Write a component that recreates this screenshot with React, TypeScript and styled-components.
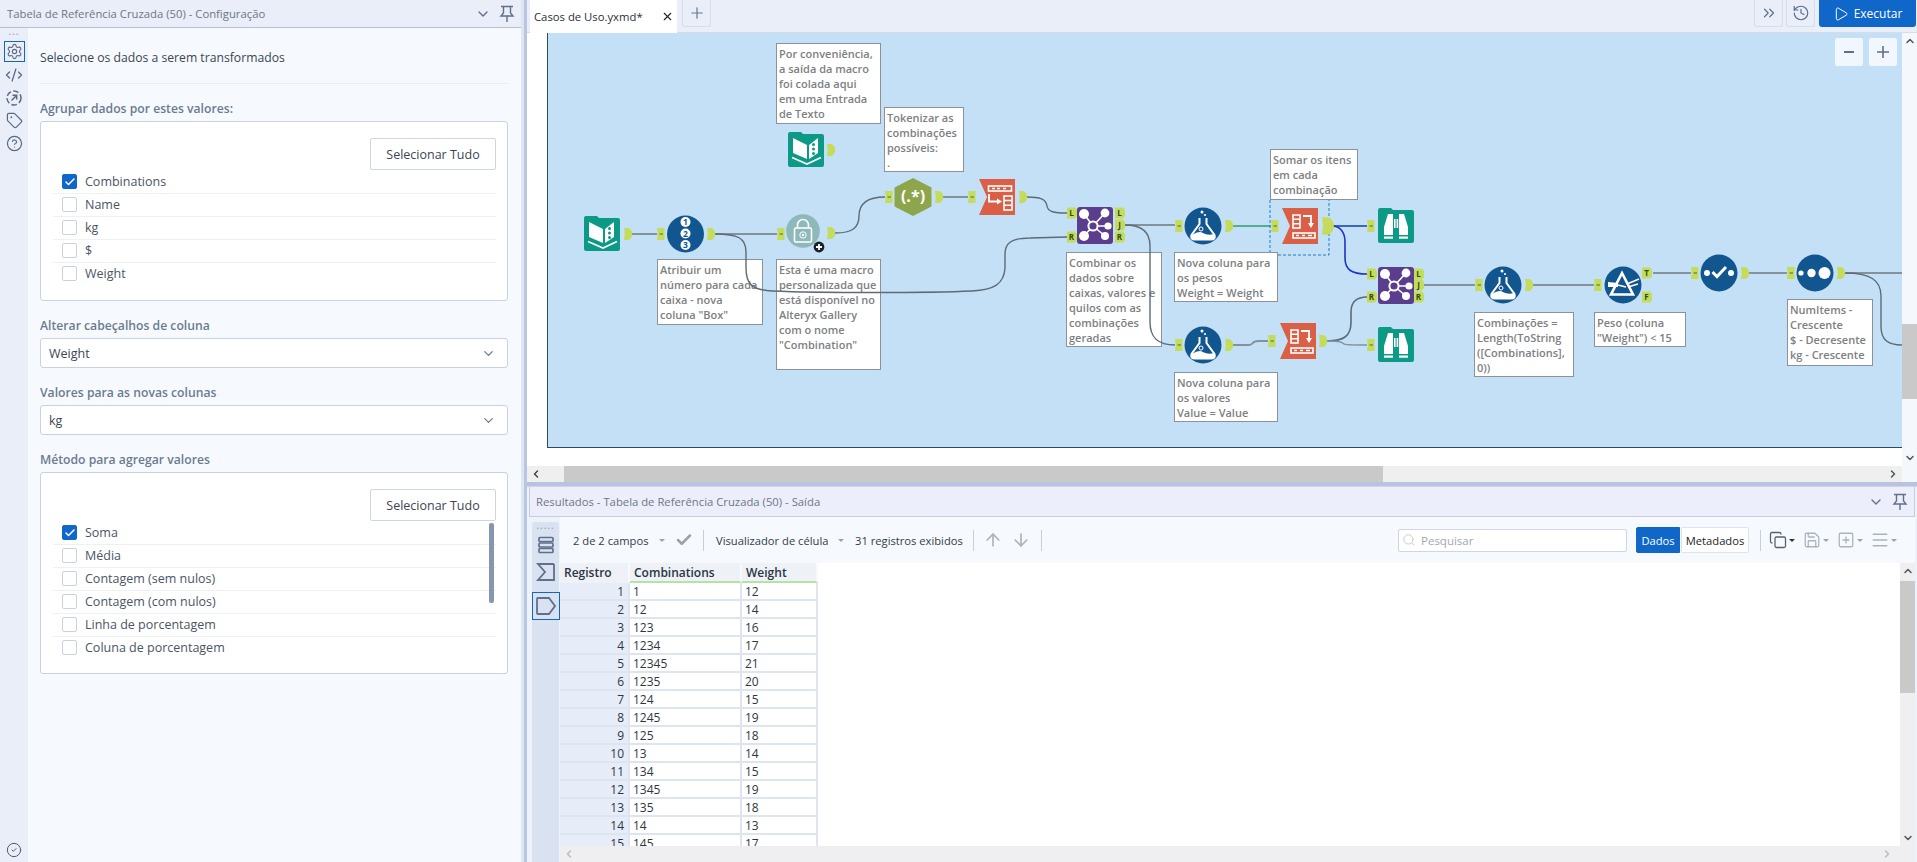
import React from 'react'
import styled, { createGlobalStyle } from 'styled-components'
import {
  Check,
  ChevronDown,
  ChevronLeft,
  ChevronRight,
  ChevronUp,
  ChevronsRight,
  CircleCheck,
  CircleHelp,
  CodeXml,
  Copy,
  History,
  Menu,
  Play,
  Plus,
  Save,
  Search,
  Settings,
  SquarePlus,
  Tag,
  X,
  ArrowDown,
  ArrowUp,
} from 'lucide-react'

const FONT = '"Open Sans", "Noto Sans", "Liberation Sans", sans-serif'

const GlobalStyle = createGlobalStyle`
  html, body {
    margin: 0;
    padding: 0;
    background: #eef2fb;
    overflow: hidden;
  }
  * {
    box-sizing: border-box;
  }
`

/* ---------- workflow data ---------- */

const notes = [
  { x: 776, y: 43, w: 105, h: 81, lines: ['Por conveniência,', 'a saída da macro', 'foi colada aqui', 'em uma Entrada', 'de Texto'] },
  { x: 884, y: 107, w: 80, h: 65, lines: ['Tokenizar as', 'combinações', 'possíveis:', '.'] },
  { x: 657, y: 259, w: 106, h: 66, lines: ['Atribuir um', 'número para cada', 'caixa - nova', 'coluna "Box"'] },
  { x: 776, y: 259, w: 105, h: 111, lines: ['Esta é uma macro', 'personalizada que', 'está disponível no', 'Alteryx Gallery', 'com o nome', '"Combination"'] },
  { x: 1066, y: 252, w: 96, h: 95, lines: ['Combinar os', 'dados sobre', 'caixas, valores e', 'quilos com as', 'combinações', 'geradas'] },
  { x: 1174, y: 252, w: 104, h: 50, lines: ['Nova coluna para', 'os pesos', 'Weight = Weight'] },
  { x: 1270, y: 149, w: 88, h: 51, lines: ['Somar os itens', 'em cada', 'combinação'] },
  { x: 1174, y: 372, w: 104, h: 50, lines: ['Nova coluna para', 'os valores', 'Value = Value'] },
  { x: 1474, y: 312, w: 100, h: 65, lines: ['Combinações =', 'Length(ToString', '([Combinations],', '0))'] },
  { x: 1594, y: 312, w: 92, h: 35, lines: ['Peso (coluna', '"Weight") < 15'] },
  { x: 1787, y: 299, w: 86, h: 67, lines: ['NumItems -', 'Crescente', '$ - Decresente', 'kg - Crescente'] },
]

const GRAY = '#84929c'
const DARK = '#5d6b76'

const wires = [
  { d: 'M630 234H657', c: GRAY, w: 2 },
  { d: 'M715 234H777', c: GRAY, w: 2 },
  { d: 'M715 234C738 234 746 238 746 252V268C746 284 752 290 772 291C820 293 930 293 972 291C994 290 1004 284 1005 268V254C1005 244 1010 238 1030 238L1067 237', c: DARK, w: 1.4 },
  { d: 'M835 233C852 233 859 228 859 216C859 204 866 197 885 197', c: DARK, w: 1.4 },
  { d: 'M943 197H968', c: GRAY, w: 2 },
  { d: 'M1027 197C1040 197 1046 199 1047 206C1048 212 1054 213 1067 213', c: DARK, w: 1.4 },
  { d: 'M1125 225H1175', c: GRAY, w: 2 },
  { d: 'M1125 225C1142 225 1150 232 1150 246V322C1150 338 1158 345 1175 345', c: DARK, w: 1.4 },
  { d: 'M1233 226H1271', c: '#58ad8e', w: 2 },
  { d: 'M1332 226H1367', c: '#3c66c4', w: 2.2 },
  { d: 'M1332 226C1340 226 1345 232 1345 242V258C1345 270 1352 274 1367 274', c: '#1c36bd', w: 1.6 },
  { d: 'M1233 345H1249C1254 345 1251 341 1258 341H1268', c: GRAY, w: 2 },
  { d: 'M1327 341C1344 341 1351 336 1351 322V312C1351 302 1356 297 1367 297', c: DARK, w: 1.6 },
  { d: 'M1327 341C1340 341 1342 342 1344 344C1345 345 1350 345 1367 345', c: GRAY, w: 1.6 },
  { d: 'M1424 285H1475', c: GRAY, w: 2 },
  { d: 'M1533 285H1594', c: GRAY, w: 2 },
  { d: 'M1653 273H1691', c: GRAY, w: 2 },
  { d: 'M1749 273H1787', c: GRAY, w: 2 },
  { d: 'M1845 273H1902', c: GRAY, w: 2 },
  { d: 'M1845 273C1870 273 1881 280 1881 296V326C1881 340 1888 345 1902 345', c: DARK, w: 1.4 },
]

const tableRows = [
  ['1', '12'], ['12', '14'], ['123', '16'], ['1234', '17'], ['12345', '21'],
  ['1235', '20'], ['124', '15'], ['1245', '19'], ['125', '18'], ['13', '14'],
  ['134', '15'], ['1345', '19'], ['135', '18'], ['14', '13'], ['145', '17'],
]

const groupFields = ['Combinations', 'Name', 'kg', '$', 'Weight']
const methods = ['Soma', 'Média', 'Contagem (sem nulos)', 'Contagem (com nulos)', 'Linha de porcentagem', 'Coluna de porcentagem']

/* ---------- workflow drawings ---------- */

const ANCHOR = '#c4dc5a'
const TEAL = '#0c9a86'
const BLUE = '#12568f'
const RED = '#db5f46'
const PURPLE = '#5b3d8e'

const InAnchor = ({ x, y }: { x: number; y: number }) => (
  <g transform={`translate(${x} ${y})`}>
    <path d="M0 -6H7.5V6H0L0.8 0Z" fill={ANCHOR} />
    <path d="M2.5 -1H6V1H2.5Z" fill="#8aa24e" />
  </g>
)

const OutAnchor = ({ x, y, big }: { x: number; y: number; big?: boolean }) => (
  <g transform={`translate(${x} ${y})${big ? ' scale(1.45)' : ''}`}>
    <path d="M0 -6H3.5C6.5 -6 8.2 -2.8 8.2 0C8.2 2.8 6.5 6 3.5 6H0L0.8 0Z" fill={ANCHOR} />
  </g>
)

const LetterAnchor = ({ x, y, letter, w = 10 }: { x: number; y: number; letter: string; w?: number }) => (
  <g transform={`translate(${x} ${y})`}>
    <path d={`M0 -5.5H${w - 2}L${w} -3V3L${w - 2} 5.5H0Z`} fill={ANCHOR} />
    <text x={w / 2 - 0.5} y="3" textAnchor="middle" fontSize="8" fontWeight="700" fontFamily={FONT} fill="#2f4d1c">
      {letter}
    </text>
  </g>
)

const FolderTile = ({ x, y, children }: { x: number; y: number; children: React.ReactNode }) => (
  <g transform={`translate(${x} ${y})`}>
    <path d="M2 0H13L15 2H34A2 2 0 0 1 36 4V33A2 2 0 0 1 34 35H2A2 2 0 0 1 0 33V2A2 2 0 0 1 2 0Z" fill={TEAL} />
    {children}
  </g>
)

const BookNode = ({ x, y }: { x: number; y: number }) => (
  <FolderTile x={x} y={y}>
    <path d="M5 6L19 13V27L5 21Z" fill="#fff" />
    <path d="M21 13L30 6V21L21 27Z" fill="#fff" />
    <circle cx="25.5" cy="12.5" r="1.5" fill={TEAL} />
    <circle cx="25.5" cy="17" r="1.5" fill={TEAL} />
    <circle cx="25.5" cy="21.5" r="1.5" fill={TEAL} />
    <path d="M4 25.5L19 32L33 25.5" fill="none" stroke="#fff" strokeWidth="1.6" />
  </FolderTile>
)

const BrowseNode = ({ x, y }: { x: number; y: number }) => (
  <FolderTile x={x} y={y}>
    <path d="M10 6H15V27H6V19Z" fill="#fff" />
    <path d="M21 6H26L30 19V27H21Z" fill="#fff" />
    <rect x="16" y="11" width="1.6" height="9" fill="#fff" />
    <rect x="18.6" y="11" width="1.6" height="9" fill="#fff" />
    <rect x="6" y="28.5" width="9" height="2.2" fill="#fff" />
    <rect x="21" y="28.5" width="9" height="2.2" fill="#fff" />
  </FolderTile>
)

const Disc = ({ cx, cy, children, fill = BLUE, r = 18.5 }: { cx: number; cy: number; children: React.ReactNode; fill?: string; r?: number }) => (
  <g transform={`translate(${cx} ${cy})`}>
    <circle r={r} fill={fill} />
    {children}
  </g>
)

const RecordIdNode = ({ cx, cy }: { cx: number; cy: number }) => (
  <Disc cx={cx} cy={cy}>
    {['1', '2', '3'].map((n, i) => (
      <g key={n} transform={`translate(0 ${i * 11.5 - 12})`}>
        <circle r="5" fill="#fff" />
        <text y="3" textAnchor="middle" fontSize="8.5" fontWeight="700" fontFamily={FONT} fill={BLUE}>
          {n}
        </text>
      </g>
    ))}
  </Disc>
)

const LockNode = ({ cx, cy }: { cx: number; cy: number }) => (
  <g>
    <Disc cx={cx} cy={cy} fill="#8db9ba" r={16.8}>
      <path d="M-5.5 -3V-6A5.5 5.5 0 0 1 5.5 -6V-3" fill="none" stroke="#fff" strokeWidth="1.6" />
      <rect x="-8.5" y="-3" width="17" height="14" rx="1.5" fill="none" stroke="#fff" strokeWidth="1.6" />
      <circle cy="4" r="3.2" fill="none" stroke="#fff" strokeWidth="1" />
      <circle cy="4" r="1.2" fill="#fff" />
    </Disc>
    <circle cx={cx + 16} cy={cy + 16} r="5.4" fill="#1c1f24" />
    <path d={`M${cx + 13} ${cy + 16}h6M${cx + 16} ${cy + 13}v6`} stroke="#fff" strokeWidth="1.8" />
  </g>
)

const RegexNode = ({ cx, cy }: { cx: number; cy: number }) => (
  <g transform={`translate(${cx} ${cy})`}>
    <path d="M0 -19L18.5 -9.5V9.5L0 19L-18.5 9.5V-9.5Z" fill="#8da64b" />
    <text y="5" textAnchor="middle" fontSize="16" fontWeight="700" fontFamily={FONT} fill="#fff">
      (.*)
    </text>
  </g>
)

const RedTile = ({ x, y, children }: { x: number; y: number; children: React.ReactNode }) => (
  <g transform={`translate(${x} ${y})`}>
    <path d="M0 0H36V36H0L8 18Z" fill={RED} />
    {children}
  </g>
)

const TextToColumnsNode = ({ x, y }: { x: number; y: number }) => (
  <RedTile x={x} y={y}>
    <rect x="9.5" y="7" width="23" height="5" fill="none" stroke="#fff" strokeWidth="1.6" />
    <path d="M13 9.5h3M18 9.5h3M24 9.5h3" stroke="#fff" strokeWidth="1.6" />
    <path d="M10 15V22.5H19" fill="none" stroke="#fff" strokeWidth="1.8" />
    <path d="M18 19.5L23 22.5L18 25.5Z" fill="#fff" />
    <rect x="25" y="17" width="8" height="14" fill="none" stroke="#fff" strokeWidth="1.6" />
    <path d="M25 21.5H33M25 26.2H33" stroke="#fff" strokeWidth="1.6" />
  </RedTile>
)

const SummarizeNode = ({ x, y }: { x: number; y: number }) => (
  <RedTile x={x} y={y}>
    <rect x="11" y="7" width="7" height="13" fill="none" stroke="#fff" strokeWidth="1.6" />
    <path d="M11 11.3H18M11 15.7H18" stroke="#fff" strokeWidth="1.6" />
    <path d="M21 8H29V15" fill="none" stroke="#fff" strokeWidth="1.8" />
    <path d="M26 15H32L29 20Z" fill="#fff" />
    <rect x="11" y="25" width="22" height="5" fill="none" stroke="#fff" strokeWidth="1.6" />
    <path d="M14 27.5h3M20 27.5h3M26 27.5h4" stroke="#fff" strokeWidth="1.6" />
  </RedTile>
)

const JoinNode = ({ x, y }: { x: number; y: number }) => (
  <g transform={`translate(${x} ${y})`}>
    <rect width="36" height="37" rx="3" fill={PURPLE} />
    <path d="M16 19L7 7M16 19L28 6M16 19H31M16 19L7 29M16 19L28 29" stroke="#fff" strokeWidth="1.6" />
    <circle cx="16" cy="19" r="4.6" fill={PURPLE} stroke="#fff" strokeWidth="2" />
    <circle cx="7" cy="7" r="5" fill="#fff" />
    <circle cx="28" cy="6" r="4.4" fill="#fff" />
    <circle cx="31" cy="19" r="3.6" fill="#fff" />
    <circle cx="7" cy="29" r="5" fill="#fff" />
    <circle cx="28" cy="29" r="4" fill="#fff" />
  </g>
)

const FormulaNode = ({ cx, cy }: { cx: number; cy: number }) => (
  <Disc cx={cx} cy={cy}>
    <circle cx="-1" cy="-14" r="1.5" fill="#fff" />
    <circle cx="2" cy="-11" r="1.1" fill="#fff" />
    <path d="M-3.5 -8V-2L-11.5 9Q-13 13.5 -8 13.5H8Q13 13.5 11.5 9L3.5 -2V-8" fill="none" stroke="#fff" strokeWidth="2" />
    <path d="M-11 9Q-4 4 0 7Q5 10 11 8Q13 14 8 14H-8Q-13 14 -11 9Z" fill="#fff" />
    <circle cx="-2" cy="3" r="2" fill="none" stroke="#fff" strokeWidth="1" />
    <circle cx="1" cy="6" r="1.3" fill={BLUE} />
  </Disc>
)

const FilterNode = ({ cx, cy }: { cx: number; cy: number }) => (
  <Disc cx={cx} cy={cy}>
    <path d="M-1 -12L10 9.5H-12Z" fill="none" stroke="#fff" strokeWidth="2.6" />
    <path d="M-15 -3L-5 -2V2L-15 2Z" fill="#fff" />
    <path d="M-5 0L3 2M4 -1L16 -6M5 2L15 -1" stroke="#fff" strokeWidth="1.4" />
  </Disc>
)

const SelectNode = ({ cx, cy }: { cx: number; cy: number }) => (
  <Disc cx={cx} cy={cy}>
    <circle cx="-12" r="3" fill="#fff" />
    <path d="M-6.5 -1L-2 3.5L7 -6" fill="none" stroke="#fff" strokeWidth="3" />
    <circle cx="12" r="3" fill="#fff" />
  </Disc>
)

const SortNode = ({ cx, cy }: { cx: number; cy: number }) => (
  <Disc cx={cx} cy={cy}>
    <circle cx="-14" r="2.6" fill="#fff" />
    <circle cx="-3.5" r="4.2" fill="#fff" />
    <circle cx="9.5" r="6" fill="#fff" />
  </Disc>
)

/* ---------- small icons ---------- */

const PinIcon = () => (
  <svg width="16" height="18" viewBox="0 0 16 18" fill="none" stroke="#5f6f8c" strokeWidth="1.4">
    <path d="M2 1.5H14M4.5 1.5V8L2 11H14L11.5 8V1.5M8 11V17" />
  </svg>
)

const RotateArrowIcon = () => (
  <svg width="18" height="18" viewBox="0 0 18 18" fill="none" stroke="#5a6a82" strokeWidth="1.5">
    <circle cx="9" cy="9" r="7" strokeDasharray="5.5 2.5" />
    <path d="M6.5 11.5L11.5 6.5M7.5 6.3H11.7V10.5" />
  </svg>
)

const RowsIcon = () => (
  <svg width="18" height="18" viewBox="0 0 18 18" fill="none" stroke="#5f6f8c" strokeWidth="1.7">
    <rect x="2" y="1.5" width="14" height="4" rx="1" />
    <rect x="2" y="7" width="14" height="4" rx="1" />
    <rect x="2" y="12.5" width="14" height="4" rx="1" />
  </svg>
)

const SigmaBoxIcon = () => (
  <svg width="20" height="20" viewBox="0 0 20 20" fill="none" stroke="#5f6f8c" strokeWidth="1.8">
    <path d="M18 2H2L9 10L2 18H18V2" />
  </svg>
)

const OutputTagIcon = () => (
  <svg width="22" height="20" viewBox="0 0 22 20" fill="none" stroke="#5f6f8c" strokeWidth="1.8">
    <path d="M2 3A1 1 0 0 1 3 2H14L20 10L14 18H3A1 1 0 0 1 2 17Z" />
  </svg>
)

/* ---------- component ---------- */

const CheckRow: React.FC<{ label: string; checked?: boolean }> = ({ label, checked }) => (
  <Row>
    <Box $checked={checked}>{checked && <Check size={12} strokeWidth={3} color="#fff" />}</Box>
    <RowLabel>{label}</RowLabel>
  </Row>
)

const App: React.FC = () => {
  return (
    <Page>
      <GlobalStyle />
      <LeftPanel>
        <PanelHeader>
          <PanelTitle>Tabela de Referência Cruzada (50) - Configuração</PanelTitle>
          <HeaderTools>
            <ChevronDown size={16} color="#5f6f8c" />
            <PinIcon />
          </HeaderTools>
        </PanelHeader>
        <PanelBody>
          <SideRail>
            <RailDots>...</RailDots>
            <RailButton $active>
              <Settings size={17} color="#5a6a82" strokeWidth={1.6} />
            </RailButton>
            <RailButton>
              <CodeXml size={18} color="#5a6a82" strokeWidth={1.7} />
            </RailButton>
            <RailButton>
              <RotateArrowIcon />
            </RailButton>
            <RailButton>
              <Tag size={17} color="#5a6a82" strokeWidth={1.7} />
            </RailButton>
            <RailButton>
              <CircleHelp size={17} color="#5a6a82" strokeWidth={1.7} />
            </RailButton>
            <RailFoot>
              <CircleCheck size={16} color="#4e5b6e" strokeWidth={1.5} />
            </RailFoot>
          </SideRail>
          <Form>
            <Intro>Selecione os dados a serem transformados</Intro>
            <FieldLabel>Agrupar dados por estes valores:</FieldLabel>
            <ListBox $height={180}>
              <SelectAll>Selecionar Tudo</SelectAll>
              {groupFields.map((f, i) => (
                <CheckRow key={f} label={f} checked={i === 0} />
              ))}
            </ListBox>
            <FieldLabel>Alterar cabeçalhos de coluna</FieldLabel>
            <SelectBox>
              Weight
              <ChevronDown size={15} color="#6d7a8e" />
            </SelectBox>
            <FieldLabel>Valores para as novas colunas</FieldLabel>
            <SelectBox>
              kg
              <ChevronDown size={15} color="#6d7a8e" />
            </SelectBox>
            <FieldLabel>Método para agregar valores</FieldLabel>
            <ListBox $height={202}>
              <SelectAll>Selecionar Tudo</SelectAll>
              {methods.map((f, i) => (
                <CheckRow key={f} label={f} checked={i === 0} />
              ))}
              <ListScroll />
            </ListBox>
          </Form>
        </PanelBody>
      </LeftPanel>
      <VSplitter />
      <RightColumn>
        <TopBar>
          <ActiveTab>
            <span>Casos de Uso.yxmd*</span>
            <X size={13} color="#222" strokeWidth={2} />
          </ActiveTab>
          <TopButton $ml={5}>
            <Plus size={18} color="#66768f" strokeWidth={1.6} />
          </TopButton>
          <TopSpacer />
          <TopButton>
            <ChevronsRight size={18} color="#5f6f8c" strokeWidth={1.6} />
          </TopButton>
          <TopButton $ml={3}>
            <History size={18} color="#5f6f8c" strokeWidth={1.6} />
          </TopButton>
          <RunButton>
            <Play size={16} color="#fff" strokeWidth={1.5} />
            Executar
          </RunButton>
        </TopBar>

        <CanvasRow>
          <Canvas>
            <Sheet>
              {notes.map((n) => (
                <Note key={n.lines[0] + n.y} $x={n.x - 548} $y={n.y - 33} $w={n.w} $h={n.h}>
                  {n.lines.map((l) => (
                    <NoteLine key={l}>{l}</NoteLine>
                  ))}
                </Note>
              ))}
              <Diagram viewBox="548 33 1354 414" width="1354" height="414">
                {wires.map((w) => (
                  <path key={w.d} d={w.d} fill="none" stroke={w.c} strokeWidth={w.w} />
                ))}
                <path d="M1270 200V252M1278 255H1329V200" fill="none" stroke="#1d78c8" strokeWidth="1" strokeDasharray="3 2" />

                <BookNode x={788} y={132} />
                <OutAnchor x={827} y={150} />

                <BookNode x={584} y={216} />
                <OutAnchor x={624} y={234} />

                <InAnchor x={657} y={234} />
                <RecordIdNode cx={685.5} cy={234} />
                <OutAnchor x={707} y={234} />

                <InAnchor x={777} y={234} />
                <LockNode cx={803} cy={231} />
                <OutAnchor x={827} y={233} />

                <InAnchor x={885} y={197} />
                <RegexNode cx={913} cy={197} />
                <OutAnchor x={935} y={197} />

                <InAnchor x={968} y={197} />
                <TextToColumnsNode x={979} y={179} />
                <OutAnchor x={1019} y={197} />

                <LetterAnchor x={1067} y={213} letter="L" />
                <LetterAnchor x={1067} y={237} letter="R" />
                <JoinNode x={1077} y={207} />
                <LetterAnchor x={1115} y={213} letter="L" />
                <LetterAnchor x={1115} y={225} letter="J" />
                <LetterAnchor x={1115} y={237} letter="R" />

                <InAnchor x={1175} y={226} />
                <FormulaNode cx={1203} cy={226} />
                <OutAnchor x={1225} y={226} />

                <InAnchor x={1271} y={226} />
                <SummarizeNode x={1282} y={208} />
                <OutAnchor x={1322} y={226} big />

                <InAnchor x={1367} y={226} />
                <BrowseNode x={1378} y={208} />

                <LetterAnchor x={1367} y={274} letter="L" />
                <LetterAnchor x={1367} y={297} letter="R" />
                <JoinNode x={1378} y={267} />
                <LetterAnchor x={1414} y={274} letter="L" />
                <LetterAnchor x={1414} y={285} letter="J" />
                <LetterAnchor x={1414} y={297} letter="R" />

                <InAnchor x={1175} y={345} />
                <FormulaNode cx={1203} cy={345} />
                <OutAnchor x={1225} y={345} />

                <InAnchor x={1268} y={341} />
                <SummarizeNode x={1280} y={323} />
                <OutAnchor x={1319} y={341} />

                <InAnchor x={1367} y={345} />
                <BrowseNode x={1378} y={327} />

                <InAnchor x={1475} y={285} />
                <FormulaNode cx={1503} cy={285} />
                <OutAnchor x={1525} y={285} />

                <InAnchor x={1594} y={285} />
                <FilterNode cx={1623} cy={285} />
                <LetterAnchor x={1642} y={273} letter="T" />
                <LetterAnchor x={1642} y={297} letter="F" />

                <InAnchor x={1691} y={273} />
                <SelectNode cx={1719} cy={273} />
                <OutAnchor x={1741} y={273} />

                <InAnchor x={1787} y={273} />
                <SortNode cx={1815} cy={273} />
                <OutAnchor x={1837} y={273} />
              </Diagram>
            </Sheet>
            <ZoomTools>
              <ZoomButton>
                <svg width="12" height="12" viewBox="0 0 12 12">
                  <path d="M1 6H11" stroke="#5f6f8c" strokeWidth="2" />
                </svg>
              </ZoomButton>
              <ZoomButton>
                <svg width="14" height="14" viewBox="0 0 14 14">
                  <path d="M1 7H13M7 1V13" stroke="#5f6f8c" strokeWidth="1.6" />
                </svg>
              </ZoomButton>
            </ZoomTools>
          </Canvas>
          <VScroll $bg="#f4f7fc">
            <ScrollArrow>
              <ChevronUp size={12} color="#555" strokeWidth={3} />
            </ScrollArrow>
            <VTrack>
              <VThumb $top={275} $height={75} />
            </VTrack>
            <ScrollArrow>
              <ChevronDown size={12} color="#555" strokeWidth={3} />
            </ScrollArrow>
          </VScroll>
        </CanvasRow>

        <HScroll>
          <HArrow $w={37}>
            <ChevronLeft size={12} color="#444" strokeWidth={3} />
          </HArrow>
          <HThumb $w={819} />
          <HArrowEnd>
            <ChevronRight size={12} color="#555" strokeWidth={3} />
          </HArrowEnd>
          <ScrollCorner />
        </HScroll>
        <HSplitter />

        <Results>
          <ResultsHeader>
            <PanelTitle>Resultados - Tabela de Referência Cruzada (50) - Saída</PanelTitle>
            <HeaderTools>
              <ChevronDown size={16} color="#5f6f8c" />
              <PinIcon />
            </HeaderTools>
          </ResultsHeader>
          <ResultsBody>
            <ResultsRail>
              <RailDots $short>.....</RailDots>
              <ResultsRailItem>
                <RowsIcon />
              </ResultsRailItem>
              <ResultsRailItem>
                <SigmaBoxIcon />
              </ResultsRailItem>
              <ResultsRailItem $active>
                <OutputTagIcon />
              </ResultsRailItem>
            </ResultsRail>
            <ResultsMain>
              <Toolbar>
                <ToolText $w={76}>2 de 2 campos</ToolText>
                <Caret $ml={10} />
                <Check size={18} color="#9aa3ad" strokeWidth={3.4} style={{ marginLeft: 10 }} />
                <ToolDivider $ml={10} />
                <ToolText $w={113} $ml={12}>Visualizador de célula</ToolText>
                <Caret $ml={9} />
                <ToolText $w={107} $ml={11}>31 registros exibidos</ToolText>
                <ToolDivider $ml={11} />
                <ToolIcon $ml={9}>
                  <ArrowUp size={20} color="#aab3bf" strokeWidth={2} />
                </ToolIcon>
                <ToolIcon $ml={8}>
                  <ArrowDown size={20} color="#aab3bf" strokeWidth={2} />
                </ToolIcon>
                <ToolDivider $ml={10} />
                <ToolSpacer />
                <SearchBox>
                  <Search size={14} color="#c2c8d0" strokeWidth={1.6} />
                  Pesquisar
                </SearchBox>
                <Segment $active $w={44}>Dados</Segment>
                <Segment $w={68}>Metadados</Segment>
                <ToolDivider $ml={11} />
                <ToolIcon $ml={8}>
                  <Copy size={18} color="#55606e" strokeWidth={1.7} />
                  <Caret $ml={2} $dark />
                </ToolIcon>
                <ToolIcon $ml={8}>
                  <Save size={18} color="#aab3bf" strokeWidth={1.7} />
                  <Caret $ml={2} />
                </ToolIcon>
                <ToolIcon $ml={8}>
                  <SquarePlus size={18} color="#aab3bf" strokeWidth={1.7} />
                  <Caret $ml={2} />
                </ToolIcon>
                <ToolIcon $ml={7}>
                  <Menu size={20} color="#aab3bf" strokeWidth={1.8} />
                  <Caret $ml={1} />
                </ToolIcon>
              </Toolbar>
              <TableRow>
                <TableClip>
                  <DataGrid>
                    <HeadCell $first>Registro</HeadCell>
                    <HeadCell>Combinations</HeadCell>
                    <HeadCell>Weight</HeadCell>
                    {tableRows.map((r, i) => (
                      <React.Fragment key={r[0]}>
                        <IndexCell>{i + 1}</IndexCell>
                        <DataCell>{r[0]}</DataCell>
                        <DataCell>{r[1]}</DataCell>
                      </React.Fragment>
                    ))}
                  </DataGrid>
                </TableClip>
                <VScroll $bg="#efeff1">
                  <ScrollArrow>
                    <ChevronUp size={12} color="#555" strokeWidth={3} />
                  </ScrollArrow>
                  <VTrack>
                    <VThumb $top={2} $height={112} />
                  </VTrack>
                  <ScrollArrow>
                    <ChevronDown size={12} color="#555" strokeWidth={3} />
                  </ScrollArrow>
                </VScroll>
              </TableRow>
              <TableHScroll>
                <ChevronLeft size={12} color="#b9bdc3" strokeWidth={3} />
                <ChevronRight size={12} color="#b9bdc3" strokeWidth={3} />
              </TableHScroll>
            </ResultsMain>
          </ResultsBody>
        </Results>
      </RightColumn>
    </Page>
  )
}

const Page = styled.div`
  display: flex;
  width: 1917px;
  height: 862px;
  overflow: hidden;
  font-family: ${FONT};
  background: #eef2fb;
`

const LeftPanel = styled.div`
  width: 521px;
  flex: none;
  display: flex;
  flex-direction: column;
`

const PanelHeader = styled.div`
  height: 28px;
  flex: none;
  display: flex;
  align-items: center;
  justify-content: space-between;
  padding: 0 6px 0 7px;
  background: #e9eef8;
  border-bottom: 1px solid #b6bfcf;
`

const PanelTitle = styled.div`
  font-size: 11.3px;
  color: #6e7784;
  white-space: nowrap;
`

const HeaderTools = styled.div`
  display: flex;
  align-items: center;
  gap: 8px;
`

const PanelBody = styled.div`
  flex: 1;
  display: flex;
  min-height: 0;
`

const SideRail = styled.div`
  width: 28px;
  flex: none;
  display: flex;
  flex-direction: column;
  align-items: center;
  background: #e9eef8;
  position: relative;
`

const RailDots = styled.div<{ $short?: boolean }>`
  height: ${(p) => (p.$short ? 9 : 13)}px;
  font-size: 10px;
  line-height: 7px;
  color: #8b96a8;
  letter-spacing: 1px;
  text-align: center;
  flex: none;
`

const RailButton = styled.div<{ $active?: boolean }>`
  width: 21px;
  height: 21px;
  margin-bottom: 2px;
  display: flex;
  align-items: center;
  justify-content: center;
  border: 1px solid ${(p) => (p.$active ? '#1568b8' : 'transparent')};
`

const RailFoot = styled.div`
  margin-top: auto;
  height: 20px;
  display: flex;
  align-items: flex-start;
`

const Form = styled.div`
  flex: 1;
  min-width: 0;
  padding: 0 13px 0 12px;
  background: #f6faff;
`

const Intro = styled.div`
  height: 56px;
  padding-top: 20px;
  font-size: 12.2px;
  line-height: 20px;
  color: #3b4654;
  border-bottom: 1px solid #e8edf4;
`

const FieldLabel = styled.div`
  height: 18px;
  margin: 15px 0 4px;
  font-size: 12.2px;
  line-height: 20px;
  font-weight: 600;
  color: #6c7a90;
`

const ListBox = styled.div<{ $height: number }>`
  position: relative;
  height: ${(p) => p.$height}px;
  padding: 16px 11px 0 12px;
  background: #fff;
  border: 1px solid #c9d2e0;
  border-radius: 3px;
`

const SelectAll = styled.div`
  width: 126px;
  height: 32px;
  margin-left: auto;
  display: flex;
  align-items: center;
  justify-content: center;
  font-size: 12.5px;
  color: #3b4654;
  background: #fff;
  border: 1px solid #cfd6e2;
  border-radius: 2px;
`

const Row = styled.div`
  height: 23px;
  display: flex;
  align-items: center;
  padding-left: 9px;
  & + & {
    padding-bottom: 1px;
    border-top: 1px solid #edf0f5;
  }
`

const Box = styled.div<{ $checked?: boolean }>`
  width: 15px;
  height: 15px;
  flex: none;
  display: flex;
  align-items: center;
  justify-content: center;
  background: ${(p) => (p.$checked ? '#0f68c9' : '#fff')};
  border: 1px solid ${(p) => (p.$checked ? '#0f68c9' : '#cbd2df')};
  border-radius: 2px;
`

const RowLabel = styled.span`
  margin-left: 8px;
  font-size: 12.5px;
  color: #4a5565;
`

const ListScroll = styled.div`
  position: absolute;
  top: 50px;
  right: 13px;
  width: 5px;
  height: 80px;
  border-radius: 2px;
  background: #8695b0;
`

const SelectBox = styled.div`
  height: 30px;
  display: flex;
  align-items: center;
  justify-content: space-between;
  padding: 0 11px 0 8px;
  font-size: 12.5px;
  color: #3b4654;
  background: #fff;
  border: 1px solid #c9d2e0;
  border-radius: 3px;
`

const VSplitter = styled.div`
  width: 6px;
  flex: none;
  background: linear-gradient(to right, #dfe6f3 0 3px, #b9c6df 3px 6px);
`

const RightColumn = styled.div`
  flex: 1;
  min-width: 0;
  display: flex;
  flex-direction: column;
`

const TopBar = styled.div`
  height: 33px;
  flex: none;
  display: flex;
  align-items: flex-start;
  padding-left: 3px;
  background: #e9eef9;
  border-bottom: 1px solid #d7dde8;
`

const ActiveTab = styled.div`
  width: 147px;
  height: 33px;
  display: flex;
  align-items: center;
  justify-content: space-between;
  padding: 0 3px 0 4px;
  margin-bottom: -1px;
  font-size: 11.3px;
  color: #2b2f36;
  background: #fff;
`

const TopButton = styled.div<{ $ml?: number }>`
  width: 29px;
  height: 27px;
  margin-left: ${(p) => p.$ml ?? 0}px;
  display: flex;
  align-items: center;
  justify-content: center;
  border: 1px solid #d6dce8;
  border-top: 0;
  border-radius: 0 0 3px 3px;
`

const TopSpacer = styled.div`
  flex: 1;
`

const RunButton = styled.div`
  width: 97px;
  height: 27px;
  margin: 0 1px 0 4px;
  display: flex;
  align-items: center;
  justify-content: center;
  gap: 5px;
  font-size: 12px;
  color: #fff;
  background: #0f68c9;
  border-radius: 0 0 3px 3px;
`

const CanvasRow = styled.div`
  height: 433px;
  flex: none;
  display: flex;
`

const Canvas = styled.div`
  position: relative;
  flex: 1;
  min-width: 0;
  display: flex;
  padding: 0 0 18px 20px;
  background: #fff;
`

const Sheet = styled.div`
  position: relative;
  flex: 1;
  overflow: hidden;
  background: #c4e0f6;
  border-left: 1px solid #2f4a5c;
  border-bottom: 1px solid #2f4a5c;
`

const Note = styled.div<{ $x: number; $y: number; $w: number; $h: number }>`
  position: absolute;
  left: ${(p) => p.$x}px;
  top: ${(p) => p.$y}px;
  width: ${(p) => p.$w}px;
  height: ${(p) => p.$h}px;
  padding: 2px 0 0 2px;
  background: #fff;
  border: 1px solid #8b9299;
  overflow: hidden;
`

const NoteLine = styled.div`
  height: 15px;
  font-size: 11px;
  line-height: 15px;
  font-weight: 600;
  color: #7d7f82;
  white-space: pre;
`

const Diagram = styled.svg`
  position: absolute;
  left: 0;
  top: 0;
  display: block;
`

const ZoomTools = styled.div`
  position: absolute;
  top: 5px;
  right: 5px;
  display: flex;
  gap: 6px;
`

const ZoomButton = styled.div`
  width: 28px;
  height: 28px;
  display: flex;
  align-items: center;
  justify-content: center;
  background: #f2f7fd;
  border-radius: 2px;
`

const VScroll = styled.div<{ $bg: string }>`
  width: 15px;
  flex: none;
  display: flex;
  flex-direction: column;
  background: ${(p) => p.$bg};
`

const ScrollArrow = styled.div`
  height: 16px;
  flex: none;
  display: flex;
  align-items: center;
  justify-content: center;
`

const VTrack = styled.div`
  position: relative;
  flex: 1;
`

const VThumb = styled.div<{ $top: number; $height: number }>`
  position: absolute;
  left: 0;
  right: 0;
  top: ${(p) => p.$top}px;
  height: ${(p) => p.$height}px;
  background: #c9c9c9;
`

const HScroll = styled.div`
  height: 16px;
  flex: none;
  display: flex;
  background: #efefef;
`

const HArrow = styled.div<{ $w: number }>`
  width: ${(p) => p.$w}px;
  flex: none;
  display: flex;
  align-items: center;
  padding-left: 3px;
`

const HThumb = styled.div<{ $w: number }>`
  width: ${(p) => p.$w}px;
  flex: none;
  background: #c9c9c9;
`

const HArrowEnd = styled.div`
  flex: 1;
  display: flex;
  align-items: center;
  justify-content: flex-end;
  padding-right: 3px;
`

const ScrollCorner = styled.div`
  width: 15px;
  flex: none;
  background: #f4f7fc;
`

const HSplitter = styled.div`
  height: 5px;
  flex: none;
  background: #b9c3df;
  border-bottom: 1px solid #cfd6e6;
`

const Results = styled.div`
  flex: 1;
  min-height: 0;
  display: flex;
  flex-direction: column;
  padding: 0 2px 0 2px;
  background: #eef2fb;
`

const ResultsHeader = styled.div`
  height: 30px;
  flex: none;
  display: flex;
  align-items: center;
  justify-content: space-between;
  padding: 0 6px 0 6px;
  background: #eceffb;
  border: 1px solid #c6cedd;
  border-top: 0;
`

const ResultsBody = styled.div`
  flex: 1;
  min-height: 0;
  display: flex;
`

const ResultsRail = styled.div`
  width: 27px;
  margin: 5px 1px 0 3px;
  flex: none;
  display: flex;
  flex-direction: column;
  align-items: center;
  background: #d9e2f1;
  border-radius: 3px 3px 0 0;
`

const ResultsRailItem = styled.div<{ $active?: boolean }>`
  width: 28px;
  height: ${(p) => (p.$active ? 28 : 27)}px;
  margin-top: ${(p) => (p.$active ? 7 : 0)}px;
  flex: none;
  display: flex;
  align-items: center;
  justify-content: center;
  border: 1px solid ${(p) => (p.$active ? '#1568b8' : 'transparent')};
`

const ResultsMain = styled.div`
  flex: 1;
  min-width: 0;
  display: flex;
  flex-direction: column;
  background: #fff;
`

const Toolbar = styled.div`
  height: 46px;
  flex: none;
  display: flex;
  align-items: center;
  padding: 0 18px 0 13px;
  background: #f6faff;
`

const ToolText = styled.span<{ $w: number; $ml?: number }>`
  width: ${(p) => p.$w}px;
  margin-left: ${(p) => p.$ml ?? 0}px;
  flex: none;
  font-size: 11.2px;
  color: #333c48;
  white-space: nowrap;
`

const Caret = styled.span<{ $ml: number; $dark?: boolean }>`
  margin-left: ${(p) => p.$ml}px;
  flex: none;
  width: 0;
  height: 0;
  border-left: 3px solid transparent;
  border-right: 3px solid transparent;
  border-top: 3px solid ${(p) => (p.$dark ? '#333' : '#9aa3ad')};
`

const ToolDivider = styled.span<{ $ml: number }>`
  margin-left: ${(p) => p.$ml}px;
  flex: none;
  width: 1px;
  height: 21px;
  background: #c8cfdb;
`

const ToolIcon = styled.span<{ $ml: number }>`
  margin-left: ${(p) => p.$ml}px;
  flex: none;
  display: flex;
  align-items: center;
`

const ToolSpacer = styled.span`
  flex: 1;
`

const SearchBox = styled.div`
  width: 229px;
  height: 23px;
  margin-right: 9px;
  flex: none;
  display: flex;
  align-items: center;
  gap: 5px;
  padding-left: 3px;
  font-size: 11.5px;
  color: #a4a8ae;
  background: #fff;
  border: 1px solid #cfd6e2;
  border-radius: 2px;
`

const Segment = styled.div<{ $active?: boolean; $w: number }>`
  width: ${(p) => p.$w}px;
  height: 26px;
  margin-right: ${(p) => (p.$active ? 1 : 0)}px;
  flex: none;
  display: flex;
  align-items: center;
  justify-content: center;
  font-size: 11.2px;
  color: ${(p) => (p.$active ? '#fff' : '#1a1f26')};
  background: ${(p) => (p.$active ? '#0f68c9' : '#fff')};
  border: 1px solid ${(p) => (p.$active ? '#0f68c9' : '#dfe4ec')};
  border-radius: ${(p) => (p.$active ? '2px 0 0 2px' : '0 2px 2px 0')};
`

const TableRow = styled.div`
  flex: 1;
  min-height: 0;
  display: flex;
`

const TableClip = styled.div`
  flex: 1;
  min-width: 0;
  overflow: hidden;
`

const DataGrid = styled.div`
  display: grid;
  grid-template-columns: 70px 112px 76px;
  grid-template-rows: 20px;
  grid-auto-rows: 18px;
  width: 258px;
`

const HeadCell = styled.div<{ $first?: boolean }>`
  display: flex;
  align-items: center;
  padding-left: 4px;
  font-size: 12px;
  font-weight: 600;
  color: #2b3644;
  background: #eef1f6;
  border-right: 2px solid #f7f9fc;
  border-bottom: 2px solid ${(p) => (p.$first ? '#eef1f6' : '#b6e2a6')};
`

const IndexCell = styled.div`
  padding-right: 4px;
  font-size: 12px;
  line-height: 18px;
  text-align: right;
  color: #2f3640;
  background: #e7edf8;
  border-bottom: 2px solid #dde5f1;
  border-right: 2px solid #dde5f1;
`

const DataCell = styled.div`
  padding-left: 3px;
  font-size: 12px;
  line-height: 18px;
  color: #2f3640;
  background: #fff;
  border-bottom: 2px solid #dde5f1;
  border-right: 2px solid #dde5f1;
`

const TableHScroll = styled.div`
  height: 16px;
  flex: none;
  display: flex;
  align-items: center;
  justify-content: space-between;
  padding: 0 22px 0 3px;
  background: #efeff1;
`

export default App
